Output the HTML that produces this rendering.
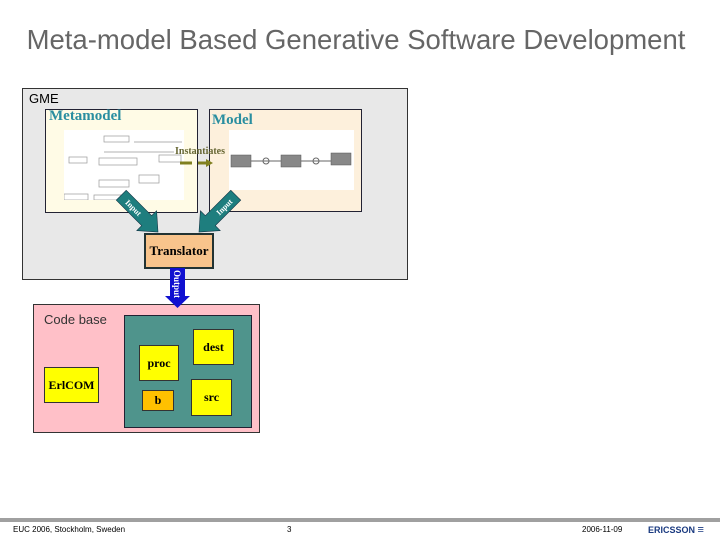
<!DOCTYPE html><html><head><style>
body{margin:0;width:720px;height:540px;background:#fff;position:relative;overflow:hidden;font-family:"Liberation Serif",serif}
.a{position:absolute;box-sizing:border-box}
.y{background:#ffff00;border:1px solid #333;font-weight:bold;font-size:12px;display:flex;align-items:center;justify-content:center}
</style></head><body>
<div class="a" style="left:0;top:24px;width:712px;text-align:center;font:27.5px 'Liberation Sans',sans-serif;color:#666;white-space:nowrap">Meta-model Based Generative Software Development</div>
<div class="a" style="left:22px;top:88px;width:386px;height:192px;background:#e8e8e8;border:1px solid #333"></div>
<div class="a" style="left:29px;top:91px;font:13px 'Liberation Sans',sans-serif">GME</div>
<div class="a" style="left:45px;top:109px;width:153px;height:104px;background:#fffbe6;border:1px solid #223"></div>
<div class="a" style="left:49px;top:108px;font-weight:bold;font-size:15px;color:#2a8ea0">Metamodel</div>
<div class="a" style="left:64px;top:130px;width:120px;height:70px;background:#fff"></div>
<svg class="a" style="left:64px;top:130px" width="120" height="70"><g stroke="#999" fill="none" stroke-width=".7"><rect x="5" y="27" width="18" height="6"/><rect x="40" y="6" width="25" height="6"/><rect x="35" y="28" width="38" height="7"/><rect x="35" y="50" width="30" height="7"/><rect x="75" y="45" width="20" height="8"/><rect x="30" y="65" width="30" height="5"/><rect x="0" y="64" width="24" height="6"/><line x1="40" y1="22" x2="110" y2="22"/><line x1="70" y1="12" x2="118" y2="12"/><rect x="95" y="25" width="22" height="7"/></g></svg>
<div class="a" style="left:209px;top:109px;width:153px;height:103px;background:#fdf0dc;border:1px solid #223"></div>
<div class="a" style="left:212px;top:112px;font-weight:bold;font-size:15px;color:#2a8ea0">Model</div>
<div class="a" style="left:229px;top:130px;width:125px;height:60px;background:#fff"></div>
<svg class="a" style="left:229px;top:130px" width="125" height="60"><g fill="#888" stroke="#555" stroke-width=".5"><rect x="2" y="25" width="20" height="12"/><rect x="52" y="25" width="20" height="12"/><rect x="102" y="23" width="20" height="12"/></g><g stroke="#666" fill="none"><line x1="22" y1="31" x2="52" y2="31"/><line x1="72" y1="31" x2="102" y2="31"/><circle cx="37" cy="31" r="3"/><circle cx="87" cy="31" r="3"/></g></svg>
<div class="a" style="left:175px;top:146px;font-weight:bold;font-size:10px;color:#666633">Instantiates</div>
<svg class="a" style="left:180px;top:158px" width="40" height="10"><line x1="0" y1="5" x2="12" y2="5" stroke="#808020" stroke-width="3"/><line x1="18" y1="5" x2="26" y2="5" stroke="#808020" stroke-width="3"/><polygon points="26,1 33,5 26,9" fill="#808020"/></svg>
<svg class="a" style="left:100px;top:180px" width="150" height="60">
<g transform="translate(58,52) rotate(45)"><polygon points="-52,-7 -16,-7 -16,-14 0,0 -16,14 -16,7 -52,7" fill="#1e7e7e" stroke="#134" stroke-width=".6"/><text x="-44" y="3" font-size="8" font-weight="bold" fill="#fff">Input</text></g>
<g transform="translate(99,52) rotate(135)"><polygon points="-52,-7 -16,-7 -16,-14 0,0 -16,14 -16,7 -52,7" fill="#1e7e7e" stroke="#134" stroke-width=".6"/><text x="-44" y="3" font-size="8" font-weight="bold" fill="#fff" transform="rotate(180 -35 0)">Input</text></g>
</svg>
<div class="a" style="left:144px;top:233px;width:70px;height:36px;background:#f8c48c;border:2px solid #233;font-weight:bold;font-size:13px;display:flex;align-items:center;justify-content:center">Translator</div>
<div class="a" style="left:33px;top:304px;width:227px;height:129px;background:#ffc0c8;border:1px solid #333"></div>
<svg class="a" style="left:165px;top:268px" width="30" height="42"><rect x="5" y="0" width="15" height="30" fill="#1010d0"/><polygon points="0,28 25,28 12.5,40" fill="#1010d0"/><text x="9" y="2" font-size="9" font-weight="bold" fill="#fff" transform="rotate(90 9 2)">Output</text></svg>
<div class="a" style="left:44px;top:312px;font:13px 'Liberation Sans',sans-serif;color:#333">Code base</div>
<div class="a" style="left:124px;top:315px;width:128px;height:113px;background:#4f948c;border:1px solid #223"></div>
<div class="a y" style="left:139px;top:345px;width:40px;height:36px">proc</div>
<div class="a y" style="left:193px;top:329px;width:41px;height:36px">dest</div>
<div class="a y" style="left:142px;top:390px;width:32px;height:21px;background:#ffc000">b</div>
<div class="a y" style="left:191px;top:379px;width:41px;height:37px">src</div>
<div class="a y" style="left:44px;top:367px;width:55px;height:36px">ErlCOM</div>
<div class="a" style="left:0;top:518px;width:720px;height:4px;background:#a0a0a0"></div>
<div class="a" style="left:13px;top:525px;font:8px 'Liberation Sans',sans-serif">EUC 2006, Stockholm, Sweden</div>
<div class="a" style="left:287px;top:525px;font:8px 'Liberation Sans',sans-serif">3</div>
<div class="a" style="left:582px;top:525px;font:8px 'Liberation Sans',sans-serif">2006-11-09</div>
<div class="a" style="left:648px;top:524px;font:bold 9px 'Liberation Sans',sans-serif;color:#1a3a80">ERICSSON <span style="font-size:11px">&#8801;</span></div>
</body></html>
